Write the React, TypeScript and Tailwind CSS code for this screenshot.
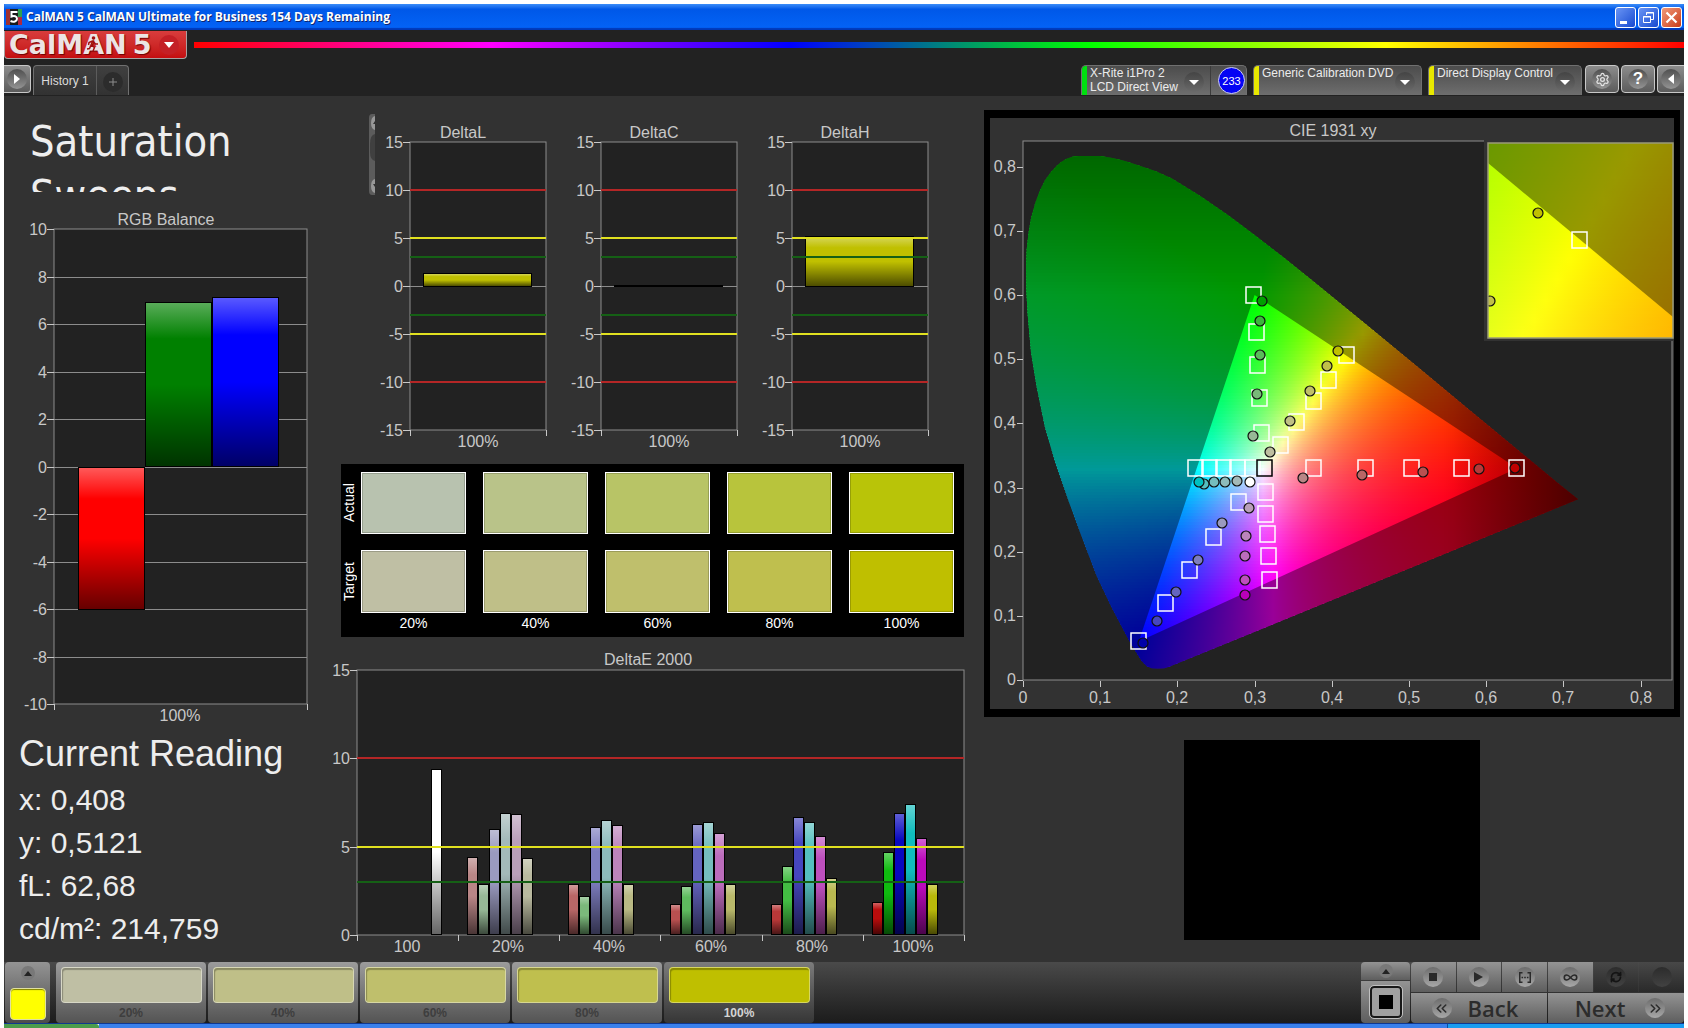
import { ReactNode, useState } from 'react'

import { clsx } from 'clsx'
import { ChevronsLeft, ChevronsRight, Infinity as InfinityIcon, RefreshCw, Settings } from 'lucide-react'

const GRID = '#8c8c8c'
const LABEL = '#c8c8c8'

/* ---------- chart parts ---------- */

const Shade = () => (
  <defs>
    <linearGradient id="shade" x1="0" y1="0" x2="0" y2="1">
      <stop offset="0" stopColor="#fff" stopOpacity="0.35" />
      <stop offset="0.22" stopColor="#fff" stopOpacity="0" />
      <stop offset="0.22" stopColor="#000" stopOpacity="0" />
      <stop offset="0.5" stopColor="#000" stopOpacity="0" />
      <stop offset="1" stopColor="#000" stopOpacity="0.6" />
    </linearGradient>
  </defs>
)

type BarProps = { x: number; y: number; w: number; h: number; fill: string }

const Bar = ({ x, y, w, h, fill }: BarProps) => (
  <g>
    <rect x={x} y={y} width={w} height={h} fill="#000" />
    <rect x={x + 1} y={y + 1} width={w - 2} height={Math.max(h - 2, 0)} fill={fill} />
    <rect x={x + 1} y={y + 1} width={w - 2} height={Math.max(h - 2, 0)} fill="url(#shade)" />
  </g>
)

type FrameProps = {
  left: number
  right: number
  top: number
  bottom: number
  min: number
  max: number
  step: number
  grid?: number[]
  xTicks: number[]
}

const Frame = ({ left, right, top, bottom, min, max, step, grid = [], xTicks }: FrameProps) => {
  const toY = (v: number) => Math.round(bottom - ((v - min) / (max - min)) * (bottom - top))
  const values: number[] = []
  for (let v = min; v <= max; v += step) values.push(v)

  return (
    <g>
      <rect x={left} y={top} width={right - left} height={bottom - top} fill="#222" />
      {grid.map(v => (
        <rect key={v} x={left} y={toY(v)} width={right - left} height="1" fill={GRID} />
      ))}
      <rect x={left} y={top} width={right - left} height={bottom - top} fill="none" stroke={GRID} />
      {values.map(v => (
        <g key={v}>
          <rect x={left - 7} y={toY(v)} width="7" height="1" fill={LABEL} />
          <text x={left - 7} y={toY(v) + 6} textAnchor="end" fill={LABEL} fontSize="16">
            {v}
          </text>
        </g>
      ))}
      {xTicks.map(x => (
        <rect key={x} x={x} y={bottom} width="1" height="6" fill={LABEL} />
      ))}
    </g>
  )
}

const Title = ({ x, y, children }: { x: number; y: number; children: ReactNode }) => (
  <text x={x} y={y} textAnchor="middle" fill={LABEL} fontSize="16">
    {children}
  </text>
)

const RgbBalance = () => (
  <svg viewBox="0 0 326 524" className="block w-full" role="img" aria-label="RGB Balance">
    <Shade />
    <Title x={162} y={21}>
      RGB Balance
    </Title>
    <Frame
      left={50}
      right={303}
      top={25}
      bottom={500}
      min={-10}
      max={10}
      step={2}
      grid={[-8, -6, -4, -2, 0, 2, 4, 6, 8]}
      xTicks={[50, 303]}
    />
    <Bar x={74} y={263} w={67} h={143} fill="#ff0000" />
    <Bar x={141} y={98} w={67} h={165} fill="#008000" />
    <Bar x={208} y={93} w={67} h={170} fill="#0000ff" />
    <Title x={176} y={517}>
      100%
    </Title>
  </svg>
)

const LIMITS = [
  { value: 10, color: '#b42626' },
  { value: 5, color: '#e0e020' },
  { value: 3, color: '#156015' },
]

const DeltaChart = ({ name, value }: { name: string; value: number }) => {
  const zero = 172
  const unit = 9.6
  const h = Math.max(Math.round(value * unit), 1)

  return (
    <svg viewBox="0 0 191 336" className="block min-w-0 flex-1" role="img" aria-label={name}>
      <Title x={88} y={24}>
        {name}
      </Title>
      <Frame left={35} right={171} top={28} bottom={316} min={-15} max={15} step={5} grid={[0]} xTicks={[35, 171]} />
      <Bar x={48} y={zero - h} w={109} h={h + 1} fill="#c0c000" />
      {LIMITS.map(({ value: v, color }) => (
        <g key={v} fill={color}>
          <rect x="35" y={Math.round(zero - v * unit) - 1} width="136" height="2" />
          <rect x="35" y={Math.round(zero + v * unit) - 1} width="136" height="2" />
        </g>
      ))}
      <Title x={103} y={333}>
        100%
      </Title>
    </svg>
  )
}

const DELTA_E = [
  {
    label: '20%',
    values: [4.4, 2.9, 6, 6.9, 6.85, 4.35],
    colors: ['#b98686', '#96b996', '#9a9abf', '#a3b9b9', '#b99fb9', '#b9b99f'],
  },
  {
    label: '40%',
    values: [2.9, 2.2, 6.1, 6.5, 6.2, 2.9],
    colors: ['#b96666', '#7bb97b', '#7d7dbf', '#8dbbbb', '#bb84bb', '#b9b984'],
  },
  {
    label: '60%',
    values: [1.75, 2.8, 6.3, 6.4, 5.8, 2.9],
    colors: ['#b95050', '#5ebb5e', '#6464bf', '#75bdbd', '#bb6cbb', '#b9b96a'],
  },
  {
    label: '80%',
    values: [1.75, 3.9, 6.7, 6.4, 5.6, 3.2],
    colors: ['#b93838', '#43bd43', '#4646bf', '#55bfbf', '#bd4fbd', '#b9b950'],
  },
  {
    label: '100%',
    values: [1.85, 4.7, 6.9, 7.4, 5.5, 2.9],
    colors: ['#b90c0c', '#0fbb0f', '#0808bf', '#0fbdbd', '#bb0abb', '#b9b90a'],
  },
]

const DeltaE = () => {
  const toY = (v: number) => Math.round(285 - (v * 265) / 15)

  return (
    <svg viewBox="0 0 654 306" className="block w-full" role="img" aria-label="DeltaE 2000">
      <Title x={318} y={15}>
        DeltaE 2000
      </Title>
      <Frame
        left={27}
        right={634}
        top={20}
        bottom={285}
        min={0}
        max={15}
        step={5}
        xTicks={[27, 128, 229, 330, 432, 533, 634]}
      />
      <Bar x={101} y={toY(9.4)} w={11} h={285 - toY(9.4)} fill="#fff" />
      {DELTA_E.map((group, i) => (
        <g key={group.label}>
          {group.values.map((v, j) => (
            <Bar
              key={j}
              x={137 + Math.round(i * 101.3) + j * 11}
              y={toY(v)}
              w={11}
              h={285 - toY(v)}
              fill={group.colors[j]}
            />
          ))}
          <Title x={178 + Math.round(i * 101.3)} y={302}>
            {group.label}
          </Title>
        </g>
      ))}
      {LIMITS.map(({ value, color }) => (
        <rect key={value} x="27" y={toY(value) - 1} width="607" height="2" fill={color} />
      ))}
      <Title x={77} y={302}>
        100
      </Title>
    </svg>
  )
}

/* ---------- CIE diagram ---------- */

const X0 = 1023
const Y0 = 680
const toPx = (x: number) => X0 + x * 772
const toPy = (y: number) => Y0 - y * 641.5

const LOCUS = [
  [0.175, 0.018], [0.1667, 0.0185], [0.16, 0.022], [0.1537, 0.0296], [0.1386, 0.059], [0.1149, 0.113],
  [0.0955, 0.162], [0.076, 0.2235], [0.0587, 0.2806], [0.0415, 0.3406], [0.0285, 0.394], [0.0177, 0.457],
  [0.0104, 0.511], [0.006, 0.5705], [0.0042, 0.61], [0.0039, 0.645], [0.0048, 0.672], [0.0072, 0.697],
  [0.0105, 0.72], [0.0155, 0.742], [0.0215, 0.762], [0.0285, 0.779], [0.036, 0.7915], [0.0437, 0.8015],
  [0.05, 0.808], [0.0566, 0.8125], [0.064, 0.8155], [0.0717, 0.8168], [0.0997, 0.8168], [0.116, 0.8138],
  [0.132, 0.809], [0.149, 0.8025], [0.172, 0.793], [0.1929, 0.7816], [0.2296, 0.7543], [0.2658, 0.7243],
  [0.3016, 0.6923], [0.3373, 0.6589], [0.3731, 0.6245], [0.4441, 0.5547], [0.5125, 0.4866],
  [0.5752, 0.4242], [0.627, 0.3725], [0.6658, 0.334], [0.6915, 0.3083], [0.719, 0.2817], [0.19, 0.021],
  [0.183, 0.0185],
]
const GAMUT = [
  [0.64, 0.33],
  [0.3, 0.6],
  [0.15, 0.06],
]

const toPath = (points: number[][]) => 'M' + points.map(([x, y]) => `${toPx(x)} ${toPy(y)}`).join('L') + 'Z'

// chromaticity -> brightest RGB with those proportions, dimmed toward the ends of the spectrum
const xyToRgb = (x: number, y: number) => {
  const X = x / y
  const Z = (1 - x - y) / y
  const r = Math.max(3.2406 * X - 1.5372 - 0.4986 * Z, 0)
  const g = Math.max(-0.9689 * X + 1.8758 + 0.0415 * Z, 0)
  const b = Math.max(0.0557 * X - 0.204 + 1.057 * Z, 0)
  const peak = Math.max(r, g, b)
  const dim = (1 - Math.max(x - 0.55, 0) * 3) * (1 - Math.max(y - 0.6, 0) * 1.5)
  const channel = (v: number) => Math.round((v / peak) * 255 * dim)
  return `rgb(${channel(r)},${channel(g)},${channel(b)})`
}

type FieldProps = {
  id: string
  x: number
  y: number
  w: number
  h: number
  cols: number
  at: (px: number, py: number) => string
}

const ColorField = ({ id, x, y, w, h, cols, at }: FieldProps) => {
  const rows = Array.from({ length: Math.ceil(h / 3) }, (_, i) => y + i * 3)
  const stops = Array.from({ length: cols + 1 }, (_, i) => i / cols)

  return (
    <g>
      {rows.map((top, i) => (
        <g key={top}>
          <linearGradient id={`${id}${i}`}>
            {stops.map(s => (
              <stop key={s} offset={s} stopColor={at(x + s * w, top + 1.5)} />
            ))}
          </linearGradient>
          <rect x={x} y={top} width={w} height={Math.min(4, y + h - top)} fill={`url(#${id}${i})`} />
        </g>
      ))}
    </g>
  )
}

const TARGETS = [
  [1254, 295], [1257, 332], [1258, 365], [1260, 398], [1262, 433],
  [1347, 355], [1329, 380], [1314, 401], [1297, 422], [1281, 445],
  [1196, 468], [1210, 468], [1224, 468], [1238, 468], [1253, 468],
  [1314, 468], [1366, 468], [1412, 468], [1462, 468], [1517, 468],
  [1266, 492], [1266, 514], [1268, 534], [1269, 556], [1270, 580],
  [1239, 502], [1214, 537], [1190, 570], [1166, 603], [1139, 641],
]

const READINGS: [number, number, string][] = [
  [1262, 301, '#00a000'], [1260, 321, '#3cb43c'], [1260, 355, '#5aba5a'], [1257, 394, '#78b878'],
  [1253, 436, '#96b996'], [1338, 351, '#c0c000'], [1327, 366, '#c0c048'], [1310, 391, '#c0c068'],
  [1290, 421, '#c0c084'], [1270, 452, '#bebea0'], [1250, 482, '#ffffff'], [1237, 481, '#a3b9b9'],
  [1225, 482, '#8dbbbb'], [1214, 482, '#75bdbd'], [1204, 484, '#55bfbf'], [1199, 482, '#00c0c0'],
  [1303, 478, '#b98686'], [1362, 475, '#b96666'], [1423, 472, '#b95050'], [1479, 469, '#b93838'],
  [1515, 468, '#c00000'], [1249, 508, '#b99fb9'], [1246, 536, '#bb84bb'], [1245, 556, '#bb6cbb'],
  [1245, 580, '#bd4fbd'], [1245, 595, '#b800b8'], [1222, 523, '#9a9abf'], [1198, 560, '#7d7dbf'],
  [1176, 592, '#6464bf'], [1157, 621, '#4646bf'], [1143, 643, '#0000a8'],
]

const Target = ({ x, y, stroke = '#fff' }: { x: number; y: number; stroke?: string }) => (
  <rect x={x - 8} y={y - 8} width="15" height="16" fill="none" stroke={stroke} strokeWidth="1.5" />
)

const Reading = ({ x, y, fill }: { x: number; y: number; fill: string }) => (
  <circle cx={x} cy={y} r="5" fill={fill} stroke="#101010" strokeWidth="1.2" />
)

const TENTHS = [0, 1, 2, 3, 4, 5, 6, 7, 8]
const tenth = (n: number) => (n === 0 ? '0' : `0,${n}`)

const CieDiagram = () => (
  <svg viewBox="990 118 684 591" className="block w-full" role="img" aria-label="CIE 1931 xy">
    <defs>
      <clipPath id="locus">
        <path d={toPath(LOCUS)} />
      </clipPath>
      <clipPath id="inset">
        <rect x="1488" y="143" width="185" height="195" />
      </clipPath>
    </defs>
    <Title x={1333} y={136}>
      CIE 1931 xy
    </Title>
    <rect x="1023" y="141" width="649" height="539" fill="#222" stroke={GRID} />
    <g clipPath="url(#locus)">
      <ColorField
        id="f"
        x={1023}
        y={150}
        w={560}
        h={522}
        cols={56}
        at={(px, py) => xyToRgb((px - X0) / 772, Math.max((Y0 - py) / 641.5, 0.01))}
      />
      <path d={toPath(GAMUT) + 'M1000 100H1600V700H1000Z'} fill="#000" fillOpacity="0.4" fillRule="evenodd" />
    </g>
    {TENTHS.map(n => (
      <g key={n} fill={LABEL} fontSize="16">
        <rect x="1017" y={Math.round(toPy(n / 10))} width="6" height="1" />
        <text x="1016" y={Math.round(toPy(n / 10)) + 5} textAnchor="end">
          {tenth(n)}
        </text>
        <rect x={Math.round(toPx(n / 10))} y="681" width="1" height="6" />
        <text x={Math.round(toPx(n / 10))} y="703" textAnchor="middle">
          {tenth(n)}
        </text>
      </g>
    ))}
    {TARGETS.map(([x, y]) => (
      <Target key={`${x}-${y}`} x={x} y={y} />
    ))}
    <Target x={1265} y={468} stroke="#000" />
    {READINGS.map(([x, y, fill]) => (
      <Reading key={`${x}-${y}`} x={x} y={y} fill={fill} />
    ))}
    <rect x="1484" y="138" width="190" height="203" fill="#323232" />
    <g clipPath="url(#inset)">
      <ColorField
        id="z"
        x={1488}
        y={143}
        w={185}
        h={195}
        cols={16}
        at={(px, py) => xyToRgb(0.4193 + (px - 1580) / 3760, 0.5053 - (py - 240) / 4000)}
      />
      <path d="M1488 163L1673 317V143H1488Z" fill="#000" fillOpacity="0.4" />
      <Target x={1580} y={240} />
      <Reading x={1538} y={213} fill="#c0c000" />
      <Reading x={1490} y={301} fill="#c0c048" />
    </g>
    <rect x="1488" y="143" width="185" height="195" fill="none" stroke="#9a9a78" strokeWidth="1.5" />
  </svg>
)

/* ---------- window chrome ---------- */

const windowButton = 'flex size-[21px] items-center justify-center rounded-[3px] border border-white bg-linear-to-br'

const TitleBar = () => (
  <div className="flex h-[26px] items-center gap-1 bg-linear-to-b from-[#3a8cf8] via-[#0058e8] via-20% to-[#0464f8] px-0.5 shadow-[inset_0_-2px_1px_#0038b8]">
    <svg viewBox="0 0 16 16" className="size-4" aria-hidden="true">
      <rect width="16" height="16" fill="#1a1a1a" />
      <path d="M0 0h4v16H0z" fill="#a03030" />
      <path d="M12 0h4v8h-4z" fill="#30a050" />
      <path d="M12 8h4v8h-4z" fill="#b02840" />
      <path
        d="M11.500 3H5.500V7.500C8 6.500 11 7 11 9.700C11 12.500 7.500 13.500 4.500 12"
        fill="none"
        stroke="#fff"
        strokeWidth="2"
      />
    </svg>
    <h1 className="flex-1 font-['Open_Sans',sans-serif] text-[12px] leading-4 font-bold text-white [text-shadow:1px_1px_0_#10246c]">
      CalMAN 5 CalMAN Ultimate for Business 154 Days Remaining
    </h1>
    <div className="flex gap-0.5">
      <button aria-label="Minimize" className={clsx(windowButton, 'from-[#6a94f4] to-[#1848d0]')}>
        <svg viewBox="0 0 19 19" className="size-full">
          <path d="M4 13h7v3H4z" fill="#fff" />
        </svg>
      </button>
      <button aria-label="Restore" className={clsx(windowButton, 'from-[#6a94f4] to-[#1848d0]')}>
        <svg viewBox="0 0 19 19" className="size-full" fill="none" stroke="#fff">
          <path d="M7.500 7V4.500H14.500V11.500H12M7 5h8" />
          <path d="M4.500 8.500h7v6h-7zM4 9h8" />
        </svg>
      </button>
      <button aria-label="Close" className={clsx(windowButton, 'from-[#f09878] to-[#c83810]')}>
        <svg viewBox="0 0 19 19" className="size-full">
          <path d="M4.500 4.500l10 10M14.500 4.500l-10 10" stroke="#fff" strokeWidth="2.200" />
        </svg>
      </button>
    </div>
  </div>
)

const Logo = () => (
  <button
    aria-label="CalMAN 5 menu"
    className="flex h-7 w-[183px] shrink-0 items-center rounded-b-[4px] border border-t-0 border-[#a8a0a0] bg-linear-to-b from-[#d83c3c] to-[#c40c10] pl-1"
  >
    <span className="relative flex items-center gap-1.5 font-['DejaVu_Sans',sans-serif] text-[27px] leading-7 font-bold text-[#ece4e4] [text-shadow:1px_1px_1px_#700000]">
      <span>CalMAN</span>
      <span>5</span>
      <svg viewBox="0 0 14 18" className="absolute top-1 left-[76px] h-[18px] w-3.5" aria-hidden="true">
        <circle cx="8.500" cy="3" r="1.800" fill="#a01010" />
        <path
          d="M8 5.500L6 10l3.500 2.500L8 16M6 10l-1.500 3.500L2 14M7.500 6L4 7.500 3.500 10M8 6.500l2.500 2.500H13"
          fill="none"
          stroke="#a01010"
          strokeWidth="1.500"
        />
      </svg>
    </span>
    <span className="ml-2 flex size-5 items-center justify-center rounded-full bg-[#c42026]">
      <svg viewBox="0 0 10 6" className="h-1.5 w-2.5">
        <path d="M0 0h10L5 6z" fill="#fff" />
      </svg>
    </span>
  </button>
)

const Knob = ({ children }: { children?: ReactNode }) => (
  <span className="flex size-5 shrink-0 items-center justify-center rounded-full bg-linear-to-b from-[#505050] to-[#949494]">
    {children}
  </span>
)

type SourceTabProps = { lines: string[]; strip: string; className: string; badge?: string }

const SourceTab = ({ lines, strip, className, badge }: SourceTabProps) => (
  <div
    className={clsx(
      'flex h-[30px] overflow-hidden rounded-t-[5px] border border-b-0 border-[#707070] bg-linear-to-b from-[#4c4c4c] to-[#6e6e6e]',
      className
    )}
  >
    <button className="flex min-w-0 flex-1 items-start text-left" aria-haspopup="menu">
      <span className={clsx('mr-[3px] h-full w-[5px] shrink-0', strip)} />
      <span className="flex-1 text-[12px] leading-[14px] whitespace-nowrap text-[#ececec]">
        {lines.map(line => (
          <span key={line} className="block">
            {line}
          </span>
        ))}
      </span>
      <span className="mt-1.5 mr-1.5 flex size-5 shrink-0 items-center justify-center rounded-full bg-linear-to-b from-[#444] to-[#6a6a6a]">
        <svg viewBox="0 0 10 5" className="h-[5px] w-2.5">
          <path d="M0 0h10L5 5z" fill="#fff" />
        </svg>
      </span>
    </button>
    {badge && (
      <span className="flex w-9 items-center justify-end border-l border-[#3c3c3c] pr-px">
        <span className="flex size-[27px] items-center justify-center rounded-full border border-[#d0d0f0] bg-[#0404f4] text-[11px] leading-3 text-white">
          {badge}
        </span>
      </span>
    )}
  </div>
)

const toolButton =
  'flex h-7 items-center justify-center rounded-[4px] border border-[#c8c8c8] bg-linear-to-b from-[#8c8c8c] to-[#5c5c5c]'

const Toolbar = () => (
  <div className="flex h-[31px] items-start">
    <button aria-label="Expand left panel" className={clsx(toolButton, 'w-[27px] rounded-l-none border-l-0')}>
      <Knob>
        <svg viewBox="0 0 6 10" className="h-2.5 w-1.5">
          <path d="M0 0v10l6-5z" fill="#fff" />
        </svg>
      </Knob>
    </button>
    <div className="ml-0.5 flex h-[30px] w-24 rounded-t-[4px] border border-b-0 border-[#707070] bg-linear-to-b from-[#404040] to-[#323232]">
      <button className="w-[62px] text-[12px] leading-4 text-[#dcdcdc]">History 1</button>
      <button
        aria-label="Add tab"
        className="flex flex-1 items-center justify-center border-l border-[#5c5c5c] pt-0.5 text-[#8c8c8c]"
      >
        <span className="flex size-5 items-center justify-center rounded-full bg-[#2c2c2c]">
          <svg viewBox="0 0 8 8" className="size-2">
            <path d="M4 0v8M0 4h8" stroke="currentColor" />
          </svg>
        </span>
      </button>
    </div>
    <div className="ml-auto flex items-start">
      <SourceTab lines={['X-Rite i1Pro 2', 'LCD Direct View']} strip="bg-[#00e010]" className="w-[166px]" badge="233" />
      <SourceTab lines={['Generic Calibration DVD']} strip="bg-[#e8e800]" className="ml-1.5 w-[169px]" />
      <SourceTab lines={['Direct Display Control']} strip="bg-[#e8e800]" className="ml-1.5 w-[154px]" />
      <div className="ml-[3px] flex gap-0.5">
        <button aria-label="Settings" className={clsx(toolButton, 'w-[34px]')}>
          <Knob>
            <Settings className="size-[15px] text-[#e4e4e4]" strokeWidth={2} />
          </Knob>
        </button>
        <button aria-label="Help" className={clsx(toolButton, 'w-[34px]')}>
          <Knob>
            <span className="text-[17px] leading-5 font-bold text-white">?</span>
          </Knob>
        </button>
        <button aria-label="Expand right panel" className={clsx(toolButton, 'w-[27px] rounded-r-none border-r-0')}>
          <Knob>
            <svg viewBox="0 0 6 10" className="h-2.5 w-1.5">
              <path d="M6 0v10L0 5z" fill="#fff" />
            </svg>
          </Knob>
        </button>
      </div>
    </div>
  </div>
)

/* ---------- swatches ---------- */

const SWATCHES = [
  { label: '20%', actual: 'bg-[#b8c2af]', target: 'bg-[#bfbfa4]' },
  { label: '40%', actual: 'bg-[#b9c389]', target: 'bg-[#bfbf88]' },
  { label: '60%', actual: 'bg-[#b8c466]', target: 'bg-[#bfbf6c]' },
  { label: '80%', actual: 'bg-[#b8c43c]', target: 'bg-[#bfbf4e]' },
  { label: '100%', actual: 'bg-[#b9c408]', target: 'bg-[#bfbf00]' },
]

const swatchBox = 'border border-white shadow-[inset_0_0_0_1px_#0000002e]'

const Swatches = () => (
  <div className="mt-[14px] mr-5 ml-[11px] flex bg-black pt-2 pr-2.5 pb-[3px] text-white">
    <div className="flex w-5 shrink-0 flex-col items-start gap-4 text-[14px] leading-4">
      <span className="h-[62px] w-4 rotate-180 text-center [writing-mode:vertical-rl]">Actual</span>
      <span className="h-[63px] w-4 rotate-180 text-center [writing-mode:vertical-rl]">Target</span>
    </div>
    <div className="grid flex-1 grid-cols-5 gap-x-[17px]">
      {SWATCHES.map(s => (
        <div key={s.label} className="flex flex-col text-center text-[14px] leading-[21px]">
          <div className={clsx('h-[62px]', swatchBox, s.actual)} />
          <div className={clsx('mt-4 h-[63px]', swatchBox, s.target)} />
          {s.label}
        </div>
      ))}
    </div>
  </div>
)

/* ---------- bottom bar ---------- */

const keyButton = 'flex items-center justify-center bg-linear-to-b from-[#949494] to-[#5e5e5e]'

const Disc = ({ children, off }: { children?: ReactNode; off?: boolean }) => (
  <span
    className={clsx(
      'flex size-5 items-center justify-center rounded-full bg-linear-to-b',
      off ? 'from-[#2c2c2c] to-[#424242]' : 'from-[#6c6c6c] to-[#a8a8a8]'
    )}
  >
    {children}
  </span>
)

const UpArrow = () => (
  <span className="flex size-3.5 items-center justify-center rounded-full bg-[#787878]">
    <svg viewBox="0 0 8 5" className="h-[5px] w-2">
      <path d="M0 5h8L4 0z" fill="#222" />
    </svg>
  </span>
)

const BottomBar = () => {
  const [selected, setSelected] = useState('100%')

  return (
    <footer className="flex h-[61px] bg-linear-to-b from-[#4a4a4a] to-[#1c1c1c] pl-px">
      <button
        aria-label="Color"
        className="flex w-[45px] flex-col items-center gap-2 rounded-[4px] bg-linear-to-b from-[#949494] to-[#4c4c4c] pt-1"
      >
        <UpArrow />
        <span className="h-8 w-9 rounded-[4px] border border-[#e0e0a0] bg-[#ffff00] shadow-[inset_0_1px_1px_#808000]" />
      </button>
      <div className="ml-1.5 flex gap-0.5">
        {SWATCHES.map(s => {
          const active = s.label === selected
          return (
            <button
              key={s.label}
              aria-pressed={active}
              onClick={() => setSelected(s.label)}
              className={clsx(
                'flex w-[150px] flex-col items-center rounded-[4px] bg-linear-to-b pt-[5px] text-[12px] leading-[20px] font-bold',
                active ? 'from-[#7c7c7c] to-[#363636] text-[#d4d4d4]' : 'from-[#9c9c9c] to-[#545454] text-[#3e3e3e]'
              )}
            >
              <span
                className={clsx(
                  'h-[37px] w-[141px] rounded-[4px] border border-[#ffffff60] shadow-[inset_1px_2px_1px_#00000048]',
                  s.target
                )}
              />
              {s.label}
            </button>
          )
        })}
      </div>
      <div className="ml-auto flex">
        <div className="flex w-[49px] flex-col gap-px">
          <button aria-label="Pattern window" className={clsx(keyButton, 'h-[18px] rounded-t-[4px]')}>
            <UpArrow />
          </button>
          <button aria-label="Pattern" className={clsx(keyButton, 'flex-1 rounded-b-[4px]')}>
            <span className="flex size-8 items-center justify-center rounded-[4px] border-2 border-[#181818] bg-[#a0a0a0] outline-1 outline-[#c0c0c0]">
              <span className="size-3.5 bg-black" />
            </span>
          </button>
        </div>
        <div className="ml-px flex w-[273px] flex-col gap-px">
          <div className="grid h-[30px] grid-cols-6 gap-px">
            <button aria-label="Stop" className={clsx(keyButton, 'rounded-tl-[4px]')}>
              <Disc>
                <span className="size-2 bg-[#2a2a2a]" />
              </Disc>
            </button>
            <button aria-label="Play" className={keyButton}>
              <Disc>
                <svg viewBox="0 0 9 10" className="h-2.5 w-[9px]">
                  <path d="M0 0v10l9-5z" fill="#2a2a2a" />
                </svg>
              </Disc>
            </button>
            <button aria-label="Read series" className={keyButton}>
              <Disc>
                <svg viewBox="0 0 12 11" className="h-[11px] w-3" fill="none" stroke="#2a2a2a" strokeWidth="1.500">
                  <path d="M3.500 0.750H0.750V10.250H3.500M8.500 0.750H11.250V10.250H8.500" />
                  <path d="M2.500 5.500h7" strokeDasharray="1.600 1.100" />
                </svg>
              </Disc>
            </button>
            <button aria-label="Read continuously" className={keyButton}>
              <Disc>
                <InfinityIcon className="size-[15px] text-[#2a2a2a]" strokeWidth={2.5} />
              </Disc>
            </button>
            <button
              aria-label="Refresh"
              className="flex items-center justify-center bg-linear-to-b from-[#484848] to-[#2a2a2a]"
            >
              <Disc off>
                <RefreshCw className="size-3 text-[#141414]" strokeWidth={3.5} />
              </Disc>
            </button>
            <button
              aria-label="Record"
              className="flex items-center justify-center rounded-tr-[4px] bg-linear-to-b from-[#484848] to-[#2a2a2a]"
            >
              <Disc off />
            </button>
          </div>
          <div className="grid flex-1 grid-cols-2 gap-px font-['Open_Sans',sans-serif] text-[22px] leading-7 font-semibold text-[#2c2c2c]">
            <button className={clsx(keyButton, 'gap-4 rounded-bl-[4px] pr-2')}>
              <Disc>
                <ChevronsLeft className="size-[17px]" strokeWidth={2.2} />
              </Disc>
              Back
            </button>
            <button className={clsx(keyButton, 'gap-5 rounded-br-[4px] pl-2')}>
              Next
              <Disc>
                <ChevronsRight className="size-[17px]" strokeWidth={2.2} />
              </Disc>
            </button>
          </div>
        </div>
      </div>
    </footer>
  )
}

/* ---------- page ---------- */

const ScrollStub = () => (
  <svg viewBox="0 0 6 81" className="h-[81px] w-1.5 shrink-0" aria-hidden="true">
    <path d="M6 0H3Q0 0 0 4V77Q0 81 3 81H6Z" fill="#5c5c5c" />
    <path d="M6 2Q2 3 2 9T6 16ZM6 65Q2 66 2 72T6 79Z" fill="#989898" />
    <path d="M6 20Q1 21 1 30V38Q1 46 6 47Z" fill="#404040" />
    <path d="M4 10l2-3v3zM4 70l2 3v-3z" fill="#333" />
  </svg>
)

export default function App() {
  return (
    <div className="flex min-h-screen flex-col bg-white px-1 pt-1 font-['Liberation_Sans',Arial,sans-serif]">
      <TitleBar />
      <header className="bg-[#222] pt-px">
        <div className="flex h-[34px] items-start">
          <Logo />
          <div className="mt-[11px] ml-[7px] h-1.5 flex-1 bg-[linear-gradient(90deg,#f00,#f0f,#00f,#0f0,#ff0,#f00)]" />
        </div>
        <Toolbar />
      </header>

      <main className="grid flex-1 grid-cols-[326fr_654fr_700fr] items-start bg-[#323232]">
        <section className="pt-[18px]">
          <h2 className="mb-3 ml-[26px] h-[78px] overflow-hidden font-['DejaVu_Sans_Condensed','DejaVu_Sans',sans-serif] text-[43px] leading-[54px] text-[#eee]">
            Saturation Sweeps
          </h2>
          <RgbBalance />
          <div className="mt-1.5 pl-[15px] text-[30px] leading-[43px] whitespace-nowrap text-[#ededed]">
            <h2 className="mb-1 text-[36px] leading-10">Current Reading</h2>
            <p>x: 0,408</p>
            <p>y: 0,5121</p>
            <p>fL: 62,68</p>
            <p>cd/m²: 214,759</p>
          </div>
        </section>

        <section className="pt-[18px]">
          <div className="flex pr-[35px] pl-[39px]">
            <ScrollStub />
            <div className="flex flex-1 pr-px">
              <DeltaChart name="DeltaL" value={1.35} />
              <DeltaChart name="DeltaC" value={0.15} />
              <DeltaChart name="DeltaH" value={5.2} />
            </div>
          </div>
          <Swatches />
          <div className="mt-[13px]">
            <DeltaE />
          </div>
        </section>

        <section className="pt-3.5 pr-1">
          <div className="border-x-[6px] border-y-[8px] border-black">
            <CieDiagram />
          </div>
          <div className="mx-auto mt-[23px] aspect-[294/199] w-[42.4%] bg-black" />
        </section>
      </main>

      <BottomBar />
      <div className="flex h-[5px] border-t border-[#103890]">
        <div className="w-[95px] rounded-tr-[3px] bg-[#4c9c4c]" />
        <div className="flex-1 bg-[#3a80ec]" />
        <div className="w-[237px] border-l border-[#0c50a0] bg-[#1a9cf0]" />
      </div>
    </div>
  )
}
